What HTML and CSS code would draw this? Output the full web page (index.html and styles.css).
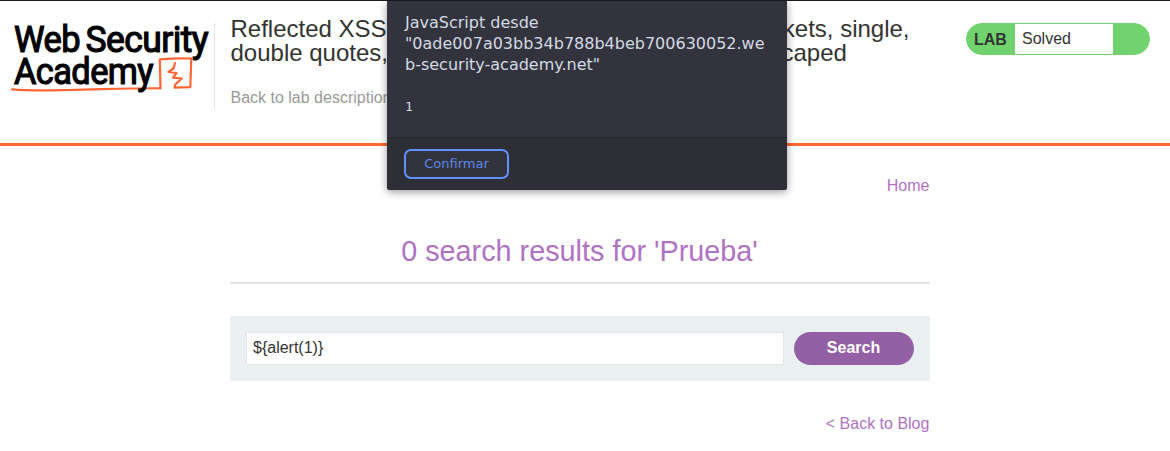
FILE: index.html
```html
<!DOCTYPE html>
<html lang="en">
<head>
<meta charset="utf-8">
<title>Web Security Academy lab</title>
<link rel="stylesheet" href="styles.css">
</head>
<body>
<header class="lab-header">
  <svg class="logo" width="214" height="107" viewBox="0 1 214 107" role="img" aria-label="Web Security Academy">
    <g class="logo-text">
      <text x="14" y="51.500" textLength="66" lengthAdjust="spacingAndGlyphs">Web</text>
      <text x="85.500" y="51.500" textLength="122.500" lengthAdjust="spacingAndGlyphs">Security</text>
    </g>
    <g class="logo-line">
      <path d="M12 89.300C30 91 48 90.400 69 90C100 89.500 130 88 160.500 88.300L159.800 59.300Q175 58 191.300 58.500L190.300 87.200L174.500 87.700L175.300 84.500L181.800 78.500L173 77.700L176.500 73L168.500 72L173.500 68.500L175 63"/>
    </g>
    <g class="logo-text">
      <text x="14" y="83.700" textLength="139" lengthAdjust="spacingAndGlyphs">Academy</text>
    </g>
  </svg>
  <div class="title-area">
    <h2 class="title">Reflected XSS into a template literal with angle brackets, single,<br>double quotes, backslash and backticks Unicode-escaped</h2>
    <a class="lab-link">Back to lab description</a>
  </div>
  <div class="status"><b class="status-label">LAB</b><span class="status-value">Solved</span></div>
</header>
<main class="content">
  <nav class="home"><a>Home</a></nav>
  <h1 class="results">0 search results for 'Prueba'</h1>
  <form class="search">
    <input class="search-input" type="text" value="${alert(1)}" aria-label="Search">
    <button class="search-button" type="button">Search</button>
  </form>
  <a class="back">&lt; Back to Blog</a>
</main>
<div class="dialog" role="dialog">
  <div class="dialog-body">
    <p class="dialog-title">JavaScript desde<br>"0ade007a03bb34b788b4beb700630052.we<br>b-security-academy.net"</p>
    <p class="dialog-message">1</p>
  </div>
  <div class="dialog-footer"><button class="confirm" type="button">Confirmar</button></div>
</div>
</body>
</html>
```
FILE: styles.css
```css
* { box-sizing: border-box; }
body {
  margin: 0;
  height: 451px;
  overflow: hidden;
  border-top: 1px solid #1c1b22;
  background: #fff;
  color: #333332;
  font: 16px/20px "Liberation Sans", Arial, sans-serif;
}
h1, h2, p { margin: 0; font-weight: 400; }
.lab-header {
  display: flex;
  align-items: flex-start;
  height: 145px;
  padding-top: 22px;
  border-bottom: 3px solid #ff6633;
}
.logo { flex: none; margin-top: -22px; }
.logo-text { fill: #000; stroke: #000; stroke-width: 1.2; font: 400 36.5px Roboto, sans-serif; letter-spacing: -.6px; }
.logo-line { fill: none; stroke: #ff6633; stroke-width: 2.2; stroke-linejoin: round; stroke-linecap: round; }
.title-area {
  flex: none;
  width: 735px;
  height: 86px;
  margin-right: 17px;
  padding: 0 0 0 15.5px;
  border-left: 1px solid #e3e3e3;
}
.title { margin-top: -6px; font-size: 24px; line-height: 24px; white-space: nowrap; }
.lab-link { display: block; margin-top: 23px; color: #999; }
.status {
  display: flex;
  width: 184px;
  height: 32px;
  border: 1px solid #70d36e;
  border-radius: 16px;
  background: #70d36e;
}
.status-label { width: 48px; padding: 6px 0 0 7px; }
.status-value { width: 98px; padding: 5px 7px 0; background: #fff; }
.content { display: flex; flex-direction: column; width: 700px; margin-left: 230px; color: #b073c4; }
.home { padding: 30px .6px 0 0; text-align: right; }
.results {
  height: 88px;
  padding: 39px 1px 0 0;
  border-bottom: 2px solid #e4e4e4;
  font-size: 28.8px;
  line-height: 32px;
  text-align: center;
}
.search { display: flex; gap: 10px; height: 65px; margin-top: 32px; padding: 16px; background: #eaeff2; }
.search-input {
  flex: 1;
  min-width: 0;
  height: 33px;
  padding: 0 6px 2px;
  border: 1px solid #e4e4e4;
  background: #fff;
  color: #333332;
  font: 16px "Liberation Sans", Arial, sans-serif;
}
.search-button {
  width: 120px;
  height: 33px;
  padding: 0 1px 2px 0;
  border: 0;
  border-radius: 17px;
  background: #9360a5;
  color: #fff;
  font: bold 16px "Liberation Sans", Arial, sans-serif;
}
.back { margin-top: 33px; padding-right: .6px; text-align: right; }
.dialog {
  position: absolute;
  left: 387px;
  top: 1px;
  width: 400px;
  height: 189px;
  border-radius: 0 0 3px 3px;
  background: #33333d;
  box-shadow: 0 2px 8px rgba(0, 0, 0, .4);
  color: #d3dae3;
  font-family: "DejaVu Sans", sans-serif;
}
.dialog-body { height: 136px; padding: 11px 18px 0; }
.dialog-title { font-size: 16px; line-height: 21px; white-space: nowrap; }
.dialog-message { margin-top: 21px; font: 13px/21px "DejaVu Sans Mono", monospace; }
.dialog-footer {
  height: 53px;
  padding: 11px 17px;
  border-top: 1px solid #282830;
  border-radius: 0 0 3px 3px;
  background: #2e2e37;
}
.confirm {
  display: block;
  width: 105px;
  height: 30px;
  padding: 0 0 1px;
  border: 2px solid #6490ff;
  border-radius: 7px;
  background: #33333d;
  color: #5f87ea;
  font: 13px "DejaVu Sans", sans-serif;
}
```
